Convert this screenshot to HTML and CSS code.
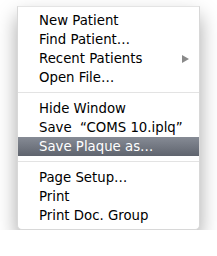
FILE: index.html
```html
<!DOCTYPE html>
<html lang="en">
<head>
    <meta charset="UTF-8">
    <title>File Menu</title>
    <link rel="stylesheet" href="styles.css">
</head>
<body>
    <div class="menu">
        <div class="item">New Patient</div>
        <div class="item">Find Patient…</div>
        <div class="item has-sub">Recent Patients <span class="arrow"></span></div>
        <div class="item">Open File…</div>
        <div class="sep"></div>
        <div class="item">Hide Window</div>
        <div class="item">Save &nbsp;“COMS 10.iplq”</div>
        <div class="item selected">Save Plaque as…</div>
        <div class="sep"></div>
        <div class="item">Page Setup…</div>
        <div class="item">Print</div>
        <div class="item">Print Doc. Group</div>
    </div>
</body>
</html>
```

FILE: styles.css
```css
body {
    margin: 0;
    padding: 6px 0 0 17px;
    background-color: #fff;
    font-family: "DejaVu Sans", sans-serif;
}

.menu {
    width: 183px;
    padding: 4px 0;
    background-color: #fff;
    border: 1px solid #d8d8d8;
    border-top-color: #e4e4e4;
    border-radius: 0 0 5px 5px;
    box-sizing: border-box;
    box-shadow: 0 10px 20px rgba(0, 0, 0, 0.35);
}

.item {
    height: 19px;
    line-height: 19px;
    padding-left: 21px;
    font-size: 13.3px;
    color: #000;
    white-space: nowrap;
    display: flex;
    align-items: center;
}

.item.has-sub {
    justify-content: space-between;
    padding-right: 10px;
}

.arrow {
    width: 0;
    height: 0;
    border-top: 4px solid transparent;
    border-bottom: 4px solid transparent;
    border-left: 7px solid #8a8a8a;
}

.item.selected {
    color: #fff;
    background: linear-gradient(#868b95, #5f646e);
}

.sep {
    height: 1px;
    margin: 5px 0 6px;
    background-color: #e3e3e3;
}
```
